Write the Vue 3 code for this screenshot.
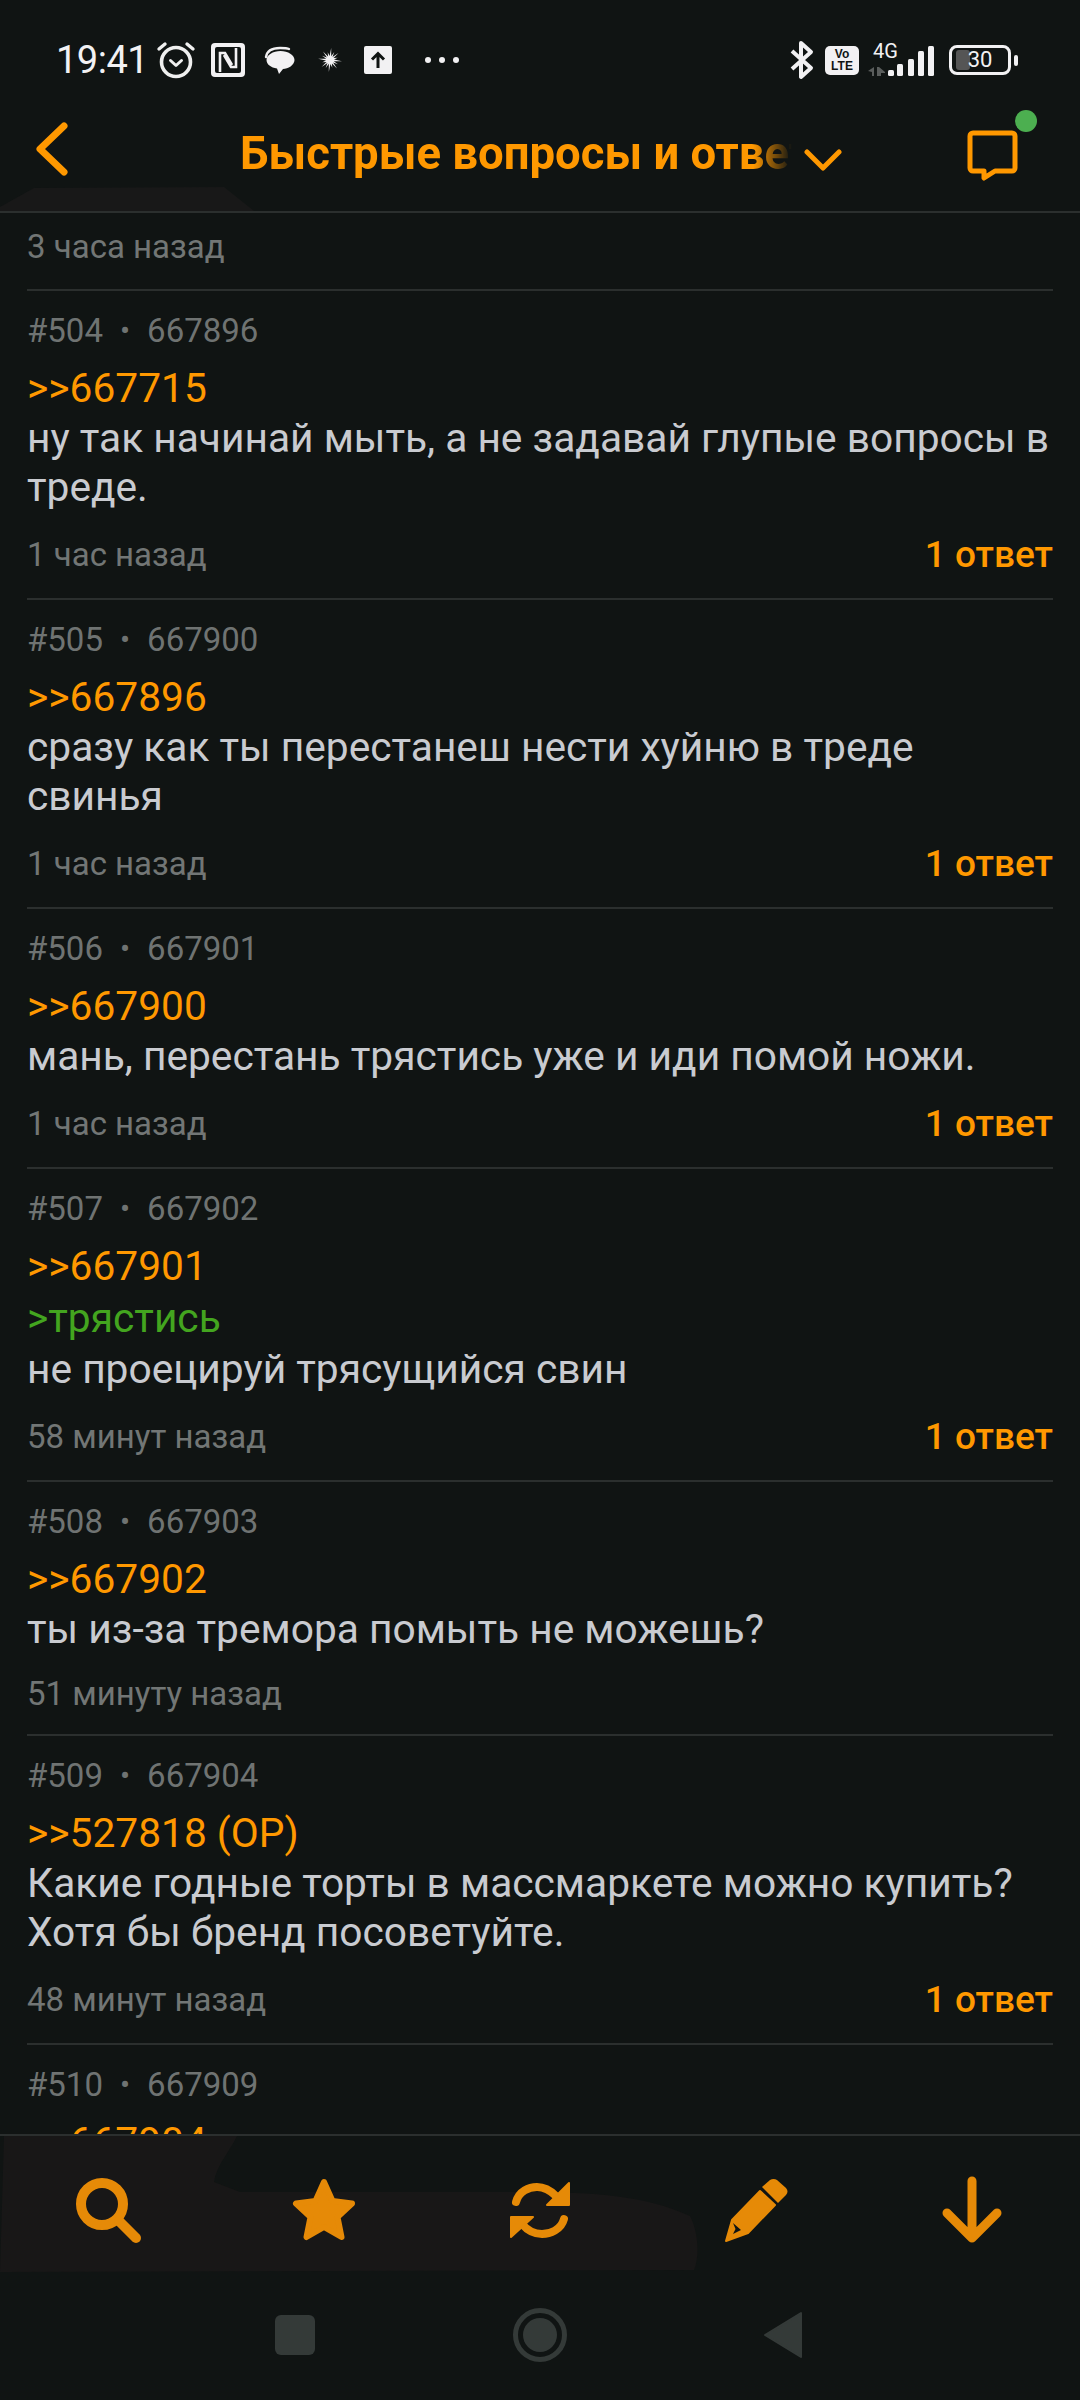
<template>
  <div class="screen">
    <div class="status">
      <span class="time">19:41</span>
      <svg class="s-alarm" width="40" height="38" viewBox="0 0 40 38" fill="none" stroke="#efefef" stroke-linecap="round" stroke-linejoin="round">
        <circle cx="20" cy="21" r="14.5" stroke-width="3.6" />
        <path d="M3 8 9 3M37 8 31 3" stroke-width="3.4" />
        <path d="M14.5 19.5 20 24.5 25.5 19.5" stroke-width="3" />
      </svg>
      <svg class="s-nfc" width="34" height="34" viewBox="0 0 34 34">
        <rect width="34" height="34" rx="4" fill="#f2f1f3" />
        <rect x="4" y="4" width="26" height="26" rx="2" fill="#101413" />
        <path d="M9 29V10h5l7 12M25 5v19h-5l-7-12" fill="none" stroke="#f2f1f3" stroke-width="2.6" />
      </svg>
      <svg class="s-bubble" width="31" height="28" viewBox="0 0 31 28">
        <path d="M2 11C3 4 10 2 16 2c4 0 7 0 9 1" fill="none" stroke="#f2f1f3" stroke-width="2.4" stroke-linecap="round" />
        <path d="M2.500 14C2.500 9 9 5 16.500 5S30.500 9 30.500 14 24 23 19 23L15 28 13 22.500C7 21.500 2.500 18.500 2.500 14Z" fill="#f2f1f3" />
      </svg>
      <svg class="s-burst" width="26" height="26" viewBox="0 0 26 26">
        <path :d="burst" fill="#f2f1f3" />
      </svg>
      <svg class="s-upload" width="28" height="28" viewBox="0 0 28 28">
        <rect width="28" height="28" rx="2" fill="#f2f1f3" />
        <path d="M14 22V8M8 13.500 14 7.500 20 13.500" fill="none" stroke="#101413" stroke-width="3" />
      </svg>
      <span class="s-dots"><i></i><i></i><i></i></span>

      <svg class="s-bt" width="24" height="40" viewBox="0 0 24 40" fill="none" stroke="#f2f1f3" stroke-width="4" stroke-linejoin="round">
        <path d="M2 11 21 28 11 37V3l10 9L2 29" />
      </svg>
      <div class="s-volte"><span>Vo</span><span>LTE</span></div>
      <div class="s-net">
        <span class="s-4g">4G</span>
        <svg width="66" height="32" viewBox="0 0 66 32" fill="#f2f1f3">
          <path d="M0 27l6-4v9H4v-4ZM9 23h2v9H9ZM11 23l6 5v1h-4v3h-2Z" fill="#5a5d5c" />
          <rect x="20" y="26" width="6" height="6" rx="1.500" />
          <rect x="29" y="20" width="6" height="12" rx="1.500" />
          <rect x="40" y="15" width="6" height="17" rx="1.500" />
          <rect x="50" y="7" width="6" height="25" rx="1.500" />
          <rect x="60" y="2" width="6" height="30" rx="1.500" />
        </svg>
      </div>
      <div class="s-batt">
        <div class="s-batt-body"><i></i><span>30</span></div>
        <b></b>
      </div>
    </div>

    <header class="topbar">
      <svg class="smudge-top" width="256" height="24" viewBox="0 0 256 24"><path d="M0 24V20L34 1 224 0 254 24Z" fill="#181818" /></svg>
      <svg class="back" width="34" height="54" viewBox="0 0 34 54" fill="none" stroke="#ff9800" stroke-width="7" stroke-linecap="round" stroke-linejoin="round">
        <path d="M29 4 5 27 29 50" />
      </svg>
      <div class="title-clip"><span class="title">Быстрые вопросы и ответы</span></div>
      <svg class="chev" width="38" height="24" viewBox="0 0 38 24" fill="none" stroke="#ff9800" stroke-width="5" stroke-linecap="round" stroke-linejoin="round">
        <path d="M3 4 19 20 35 4" />
      </svg>
      <div class="chat">
        <svg width="52" height="52" viewBox="0 0 52 52" fill="none" stroke="#ff9800" stroke-width="5" stroke-linejoin="round">
          <path d="M6 3H45a3 3 0 0 1 3 3V38a3 3 0 0 1-3 3H28L17 48V41H6a3 3 0 0 1-3-3V6a3 3 0 0 1 3-3Z" />
        </svg>
        <span class="online"></span>
      </div>
    </header>

    <main class="list">
      <div class="list-scroll">
        <div class="tail">3 часа назад</div>
        <article v-for="post in posts" :key="post.num" class="post">
          <div class="meta"><span>#{{ post.num }}</span><span class="dot">•</span><span>{{ post.id }}</span></div>
          <div class="link">&gt;&gt;{{ post.ref }}</div>
          <div v-if="post.quote" class="quote">&gt;{{ post.quote }}</div>
          <div class="body">{{ post.text }}</div>
          <div v-if="post.time" class="foot" :class="{ short: !post.replies }">
            <span class="ago">{{ post.time }}</span>
            <span v-if="post.replies" class="replies">{{ post.replies }}</span>
          </div>
        </article>
      </div>
    </main>

    <footer class="toolbar">
      <svg class="smudge-bottom" width="710" height="136" viewBox="0 0 710 136">
        <path d="M4 0H237C230 15 216 30 214 46L240 56H526C596 56 646 60 690 80C698 95 700 120 694 134L0 136Z" fill="#181717" />
      </svg>
      <div class="tool">
        <svg width="72" height="72" viewBox="0 0 72 72" fill="none" stroke="#e68a07" stroke-width="10" stroke-linecap="round">
          <circle cx="30" cy="30" r="21" />
          <path d="M47 47 64 64" />
        </svg>
      </div>
      <div class="tool">
        <svg width="72" height="72" viewBox="0 0 72 72">
          <path d="M36 8 44.500 27 64 29.500 49.500 43 53.500 63 36 53 18.500 63 22.500 43 8 29.500 27.500 27Z" fill="#e68a07" stroke="#e68a07" stroke-width="6" stroke-linejoin="round" />
        </svg>
      </div>
      <div class="tool">
        <svg width="72" height="72" viewBox="0 0 72 72" fill="none" stroke="#e68a07" stroke-width="8" stroke-linecap="round">
          <path d="M12 28C15 17 25 13 33 13c8 0 14 4 19 9" />
          <path d="M60 45C57 56 46 60 38 60c-9 0-15-4-20-10" />
          <path d="M65 9V31H43Z" fill="#e68a07" stroke-width="2" stroke-linejoin="round" />
          <path d="M7 63V43H29Z" fill="#e68a07" stroke-width="2" stroke-linejoin="round" />
        </svg>
      </div>
      <div class="tool">
        <svg width="72" height="72" viewBox="0 0 72 72">
          <path d="M42 13 50 6C52 4.500 55 4.500 57 6L66 14C68 16 68 19 66 21L58 29Z" fill="#e68a07" />
          <path d="M40 17 55 31 28 59 6 67 12 46Z" fill="#e68a07" stroke="#e68a07" stroke-width="2" stroke-linejoin="round" />
          <path d="M13 49 15.500 55 13 60 21 56Z" fill="#101413" />
        </svg>
      </div>
      <div class="tool">
        <svg width="72" height="72" viewBox="0 0 72 72" fill="none" stroke="#e68a07" stroke-width="9" stroke-linecap="round" stroke-linejoin="round">
          <path d="M36 7V64M11 39 36 64 61 39" />
        </svg>
      </div>
    </footer>

    <nav class="navbar">
      <span class="nav-square"></span>
      <span class="nav-circle"><i></i></span>
      <svg class="nav-tri" width="40" height="48" viewBox="0 0 40 48"><path d="M38 2V46L2 24Z" fill="#343a38" stroke="#343a38" stroke-width="2" stroke-linejoin="round" /></svg>
    </nav>
  </div>
</template>

<script setup>
const posts = [
  { num: 504, id: 667896, ref: '667715', text: 'ну так начинай мыть, а не задавай глупые вопросы в треде.', time: '1 час назад', replies: '1 ответ' },
  { num: 505, id: 667900, ref: '667896', text: 'сразу как ты перестанеш нести хуйню в треде свинья', time: '1 час назад', replies: '1 ответ' },
  { num: 506, id: 667901, ref: '667900', text: 'мань, перестань трястись уже и иди помой ножи.', time: '1 час назад', replies: '1 ответ' },
  { num: 507, id: 667902, ref: '667901', quote: 'трястись', text: 'не проецируй трясущийся свин', time: '58 минут назад', replies: '1 ответ' },
  { num: 508, id: 667903, ref: '667902', text: 'ты из-за тремора помыть не можешь?', time: '51 минуту назад' },
  { num: 509, id: 667904, ref: '527818 (OP)', text: 'Какие годные торты в массмаркете можно купить? Хотя бы бренд посоветуйте.', time: '48 минут назад', replies: '1 ответ' },
  { num: 510, id: 667909, ref: '667904', text: '' },
]

// thin spiky flash icon in the status bar, longest spike points left
const spikes = [12, 9, 11, 8, 12, 9, 11, 8, 13, 9, 11, 8, 12, 9, 11, 8]
const burst = spikes.map((len, i) => {
  const a = (i / spikes.length) * Math.PI * 2 + Math.PI + 0.1
  const next = a + Math.PI / spikes.length
  const tip = `${(14 + Math.cos(a) * len).toFixed(1)} ${(13 + Math.sin(a) * len).toFixed(1)}`
  const notch = `${(14 + Math.cos(next) * 4).toFixed(1)} ${(13 + Math.sin(next) * 4).toFixed(1)}`
  return `${i ? 'L' : 'M'}${tip}L${notch}`
}).join('') + 'Z'
</script>

<style>
html, body { background: #101413; }
</style>

<style scoped>
.screen {
  width: 1080px;
  height: 2400px;
  display: flex;
  flex-direction: column;
  overflow: hidden;
  background: #101413;
  font-family: Roboto, "Noto Sans", sans-serif;
}

/* status bar */
.status {
  height: 104px;
  flex: none;
  box-sizing: border-box;
  padding: 16px 62px 0 56px;
  display: flex;
  align-items: center;
  color: #f2f1f3;
}
.time { font-size: 38px; width: 87px; letter-spacing: -0.5px; white-space: nowrap; }
.s-alarm { margin-left: 13px; margin-top: -1px; }
.s-nfc { margin-left: 15px; }
.s-bubble { margin-left: 19px; }
.s-burst { margin-left: 21px; }
.s-upload { margin-left: 22px; }
.s-dots { margin-left: 33px; width: 34px; display: flex; justify-content: space-between; }
.s-dots i { width: 6px; height: 6px; border-radius: 50%; background: #f2f1f3; }
.s-bt { margin-left: auto; }
.s-volte {
  margin-left: 11px;
  width: 34px;
  height: 29px;
  border-radius: 5px;
  background: #f2f1f3;
  color: #101413;
  display: flex;
  flex-direction: column;
  align-items: center;
  justify-content: center;
  font-size: 12px;
  line-height: 12px;
  font-weight: 700;
  font-family: "Liberation Sans", sans-serif;
}
.s-net { margin-left: 9px; width: 66px; height: 32px; position: relative; }
.s-4g { position: absolute; left: 5px; top: -3px; font-size: 20px; line-height: 20px; }
.s-batt { margin-left: 15px; display: flex; align-items: center; gap: 3px; }
.s-batt-body {
  width: 62px;
  height: 30px;
  box-sizing: border-box;
  border: 3px solid #f2f1f3;
  border-radius: 8px;
  position: relative;
  display: flex;
  align-items: center;
  justify-content: center;
}
.s-batt-body i { position: absolute; left: 4px; top: 2px; bottom: 2px; width: 14px; border-radius: 3px; background: #555; }
.s-batt-body span { position: relative; font-size: 22px; line-height: 22px; }
.s-batt b { width: 4px; height: 11px; border-radius: 2px; background: #f2f1f3; }

/* top bar */
.topbar {
  height: 109px;
  flex: none;
  box-sizing: border-box;
  padding: 0 0 0 35px;
  position: relative;
  display: flex;
  align-items: center;
  border-bottom: 2px solid #2b2f2e;
}
.smudge-top { position: absolute; left: 0; bottom: 0; }
.back { position: relative; margin-top: -17px; }
.title-clip {
  margin-left: 171px;
  margin-top: -8px;
  width: 552px;
  overflow: hidden;
  white-space: nowrap;
  -webkit-mask-image: linear-gradient(to right, #000 93%, transparent 100%);
  mask-image: linear-gradient(to right, #000 93%, transparent 100%);
}
.title { font-size: 45.5px; line-height: 56px; font-weight: 700; color: #ff9800; }
.chev { margin-left: 12px; margin-top: 4px; }
.chat { margin-left: 125px; margin-top: -4px; position: relative; width: 52px; height: 52px; }
.online {
  position: absolute;
  left: 48px;
  top: -20px;
  width: 22px;
  height: 22px;
  border-radius: 50%;
  background: #4caf50;
}

/* posts */
.list { flex: 1; min-height: 0; overflow: hidden; }
.list-scroll { padding: 0 27px; }
.tail {
  height: 76px;
  padding-top: 11px;
  box-sizing: border-box;
  font-size: 33px;
  line-height: 46px;
  color: #727675;
}
.post {
  border-top: 2px solid #2b2f2e;
  padding-top: 19px;
  padding-bottom: 19px;
}
.meta {
  height: 40px;
  margin-bottom: 13px;
  display: flex;
  align-items: center;
  font-size: 33px;
  color: #6f7372;
}
.dot { margin: 0 17px; font-size: 30px; }
.link { font-size: 40.7px; line-height: 51px; color: #ff9800; }
.quote { font-size: 40.7px; line-height: 53px; color: #43a51f; }
.body { font-size: 40.7px; line-height: 49px; color: #c9cbd0; }
.foot {
  margin-top: 17px;
  height: 50px;
  display: flex;
  align-items: center;
  justify-content: space-between;
}
.foot.short { height: 44px; }
.ago { font-size: 33px; color: #727675; }
.replies { font-size: 37px; font-weight: 500; color: #ff9800; }

/* bottom toolbar */
.toolbar {
  height: 136px;
  flex: none;
  box-sizing: border-box;
  position: relative;
  display: flex;
  align-items: center;
  border-top: 2px solid #2b2f2e;
  padding-top: 14px;
}
.smudge-bottom { position: absolute; left: 0; top: 0; }
.tool { position: relative; flex: 1; display: flex; justify-content: center; }

/* android nav */
.navbar {
  height: 130px;
  flex: none;
  position: relative;
  display: flex;
  align-items: center;
}
.nav-square {
  margin-left: 275px;
  width: 40px;
  height: 40px;
  border-radius: 6px;
  background: #343a38;
}
.nav-circle {
  margin-left: 198px;
  width: 54px;
  height: 54px;
  box-sizing: border-box;
  border: 5px solid #343a38;
  border-radius: 50%;
  display: flex;
  align-items: center;
  justify-content: center;
}
.nav-circle i { width: 34px; height: 34px; border-radius: 50%; background: #343a38; }
.nav-tri { margin-left: 196px; }
</style>
